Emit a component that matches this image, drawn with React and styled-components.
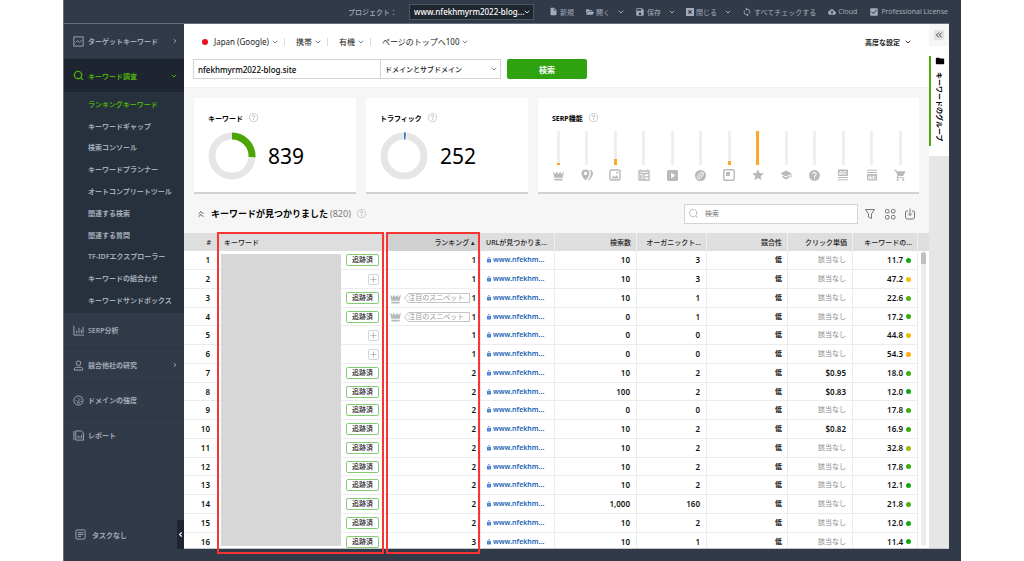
import styled, { createGlobalStyle } from "styled-components";
import {
    MdInsertDriveFile, MdSave, MdSync, MdCloudUpload, MdCheckBox,
    MdStar, MdSchool, MdHelp, MdShoppingCart, MdFolder, MdLock
} from "react-icons/md";
import { FaFolderOpen } from "react-icons/fa";
import { ChevronDown, ChevronRight, ChevronLeft, ChevronsUp, ChevronsLeft, Search, Plus } from "lucide-react";

const Colors = {
    frame: "#313a49",
    frameEdge: "#667080",
    submenu: "#27313d",
    active: "#1e2530",
    menuText: "#a3acb8",
    green: "#4dab09",
    button: "#2ea30f",
    page: "#f6f6f6",
    line: "#ececec",
    icon: "#b9b9b9",
    red: "#f83535",
};

const GlobalStyle = createGlobalStyle`
    * {
        box-sizing: border-box;
    }
    body {
        margin: 0;
        background: white;
        overflow: hidden;
    }
    body, button, input, select {
        font-family: "Noto Sans", "Noto Sans CJK JP", sans-serif;
        font-size: 8px;
        color: #222;
    }
    button {
        border: 0;
        padding: 0;
        background: none;
        cursor: pointer;
    }
    a {
        text-decoration: none;
    }
    svg {
        flex: none;
        display: block;
    }
`;

const Frame = styled.div`
    height: 100vh;
    margin: 0 63px;
    padding-bottom: 12px;
    display: flex;
    flex-direction: column;
    background: ${Colors.frame};
    border-left: 1px solid ${Colors.frameEdge};
`;

/* top bar */
const TopBar = styled.header`
    height: 24px;
    flex: none;
    margin-right: 12px;
    padding-right: 1px;
    border-bottom: 1px solid ${Colors.frameEdge};
    display: flex;
    align-items: center;
    justify-content: flex-end;
    color: ${Colors.menuText};
`;
const ProjectLabel = styled.label`
    display: flex;
    align-items: center;
    gap: 12px;
    margin-right: 15px;
    font-size: 7px;
    font-weight: 500;
`;
const SelectBox = styled.span`
    position: relative;
    display: flex;
    align-items: center;
    color: ${({ $caret }) => $caret || "#76879b"};
    svg {
        position: absolute;
        right: 3px;
        pointer-events: none;
    }
`;
const ProjectSelect = styled.select`
    appearance: none;
    width: 125px;
    height: 16px;
    padding: 0 0 0 4px;
    border: 1px solid #4d5666;
    background: #20262f;
    color: white;
    font-weight: 500;
`;
const ToolButton = styled.button`
    display: flex;
    align-items: center;
    gap: 2px;
    margin-right: ${({ $menu }) => ($menu ? 10 : 12)}px;
    color: ${Colors.menuText};
    font-size: 7px;
    white-space: nowrap;
    &:last-child {
        margin-right: 0;
    }
    svg + span + svg {
        margin-left: 5px;
    }
`;

/* sidebar */
const Body = styled.div`
    flex: 1;
    min-height: 0;
    padding-right: 12px;
    display: flex;
`;
const Sidebar = styled.nav`
    width: 120px;
    flex: none;
    display: flex;
    flex-direction: column;
`;
const MenuItem = styled.a`
    height: ${({ $active }) => ($active ? 34 : 35)}px;
    flex: none;
    display: flex;
    align-items: center;
    gap: 4px;
    padding: 0 6px 0 9px;
    font-weight: 600;
    font-size: 7px;
    color: ${({ $active }) => ($active ? Colors.green : Colors.menuText)};
    background: ${({ $active }) => ($active ? Colors.active : "none")};
    border-bottom: 1px solid ${({ $last }) => ($last ? "transparent" : "#2b3441")};
    span {
        flex: 1;
    }
`;
const SubMenu = styled.ul`
    list-style: none;
    margin: 0;
    padding: 0 0 2px 24px;
    height: 220px;
    flex: none;
    display: flex;
    flex-direction: column;
    background: ${Colors.submenu};
    li {
        flex: 1;
        display: flex;
        align-items: center;
    }
`;
const SubLink = styled.a`
    font-size: 7px;
    font-weight: 600;
    white-space: nowrap;
    color: ${({ $active }) => ($active ? Colors.green : Colors.menuText)};
`;
const SidebarFoot = styled.div`
    margin-top: auto;
    display: flex;
    align-items: stretch;
    height: 29px;
    padding-left: 11px;
    color: ${Colors.menuText};
`;
const Tasks = styled.div`
    flex: 1;
    display: flex;
    align-items: center;
    gap: 6px;
    font-weight: 600;
    font-size: 7px;
`;
const Collapse = styled.button`
    width: 7px;
    background: ${Colors.active};
    color: white;
`;

/* workspace */
const Main = styled.main`
    flex: 1;
    min-width: 0;
    display: flex;
    flex-direction: column;
    background: ${Colors.page};
    border-bottom: 1px solid #c4c6ca;
`;
const Filters = styled.section`
    flex: none;
    height: 64px;
    padding: 10px 10px 0 9px;
    background: white;
    display: flex;
    flex-direction: column;
    gap: 10px;
    border-bottom: 1px solid #f0f0f0;
`;
const FilterRow = styled.div`
    height: 15px;
    padding-right: 7px;
    display: flex;
    align-items: center;
`;
const FilterButton = styled.button`
    display: flex;
    align-items: center;
    gap: 2px;
    height: 8px;
    padding: 0 5px 0 0;
    margin-right: 11px;
    border-right: 1px solid ${({ $last }) => ($last ? "transparent" : "#dcdcdc")};
    svg {
        color: #76879b;
    }
`;
const AdvancedButton = styled(FilterButton)`
    gap: 4px;
    margin: 0 0 0 auto;
    padding: 0;
    border: 0;
    font-size: 7px;
    font-weight: 600;
    svg {
        color: #333;
    }
`;
const Flag = styled.span`
    width: 10px;
    height: 7px;
    margin: 0 4px 0 7px;
    display: flex;
    align-items: center;
    justify-content: center;
    &::after {
        content: "";
        width: 6px;
        height: 6px;
        border-radius: 50%;
        background: #e8131d;
    }
`;
const SearchRow = styled.form`
    display: flex;
    height: 20px;
`;
const DomainInput = styled.input`
    width: 188px;
    padding: 0 4px;
    border: 1px solid #d4d4d4;
    font-weight: 500;
    color: black;
`;
const ScopeSelect = styled.select`
    appearance: none;
    width: 120px;
    height: 20px;
    padding: 0 4px;
    font-size: 7px;
    font-weight: 500;
    background: white;
    border: 1px solid #d4d4d4;
    border-left: 0;
`;
const SearchButton = styled.button`
    width: 80px;
    margin-left: 6px;
    border-radius: 2px;
    background: ${Colors.button};
    color: white;
    font-weight: 700;
`;
const Cards = styled.section`
    flex: none;
    display: flex;
    gap: 10px;
    padding: 10px 10px 0;
`;
const Card = styled.article`
    width: ${({ $wide }) => ($wide ? "auto" : "162px")};
    flex: ${({ $wide }) => ($wide ? 1 : "none")};
    height: 96px;
    padding: 13px 12px 0 14px;
    background: white;
    border-bottom: 2px solid #d2d2d2;
`;
const CardTitle = styled.h2`
    margin: 0;
    height: 13px;
    display: flex;
    align-items: center;
    gap: 6px;
    font-size: 7px;
    font-weight: 700;
    color: black;
`;
const Metric = styled.div`
    display: flex;
    align-items: center;
    gap: 12px;
    margin-top: 8px;
    font-size: 21px;
    line-height: 48px;
    color: black;
`;
const Features = styled.ul`
    list-style: none;
    margin: 7px 0 0 -1px;
    padding: 0;
    display: flex;
    justify-content: space-between;
`;
const Feature = styled.li`
    width: 14px;
    display: flex;
    flex-direction: column;
    align-items: center;
    gap: 3px;
    color: ${Colors.icon};
`;
const FeatureIcon = styled.span`
    height: 14px;
    display: flex;
    align-items: center;
`;
const Bar = styled.div`
    width: 3px;
    height: 34px;
    display: flex;
    align-items: flex-end;
    background: #efefef;
    &::after {
        content: "";
        width: 3px;
        height: ${({ $value }) => $value}px;
        background: #ffa62b;
    }
`;
const ListHead = styled.div`
    flex: 1 0 auto;
    max-height: 39px;
    padding: 0 13px 0 12px;
    display: flex;
    align-items: center;
    color: #777;
    h1 {
        margin: 0 2px 0 5px;
        font-size: 9px;
        font-weight: 700;
        color: black;
    }
    > span {
        font-size: 9px;
        margin-right: 6px;
    }
`;
const ListSearch = styled.label`
    width: 174px;
    height: 20px;
    margin: 0 6px 0 auto;
    padding: 0 3px;
    display: flex;
    align-items: center;
    gap: 6px;
    background: white;
    border: 1px solid #d4d4d4;
    color: #b4bcc6;
    input {
        flex: 1;
        min-width: 0;
        padding: 0;
        border: 0;
        outline: 0;
        font-size: 7px;
    }
    input::placeholder {
        color: #777;
    }
`;
const IconRow = styled.div`
    display: flex;
    gap: 8px;
    button {
        color: #777;
    }
`;

/* keyword table */
const TableArea = styled.section`
    position: relative;
    height: 315px;
    flex: none;
    display: flex;
    background: white;
`;
const TableClip = styled.div`
    flex: 1;
    min-width: 0;
    overflow: hidden;
`;
const Table = styled.table`
    width: 100%;
    table-layout: fixed;
    border-collapse: separate;
    border-spacing: 0;
`;
const Col = styled.col`
    width: ${({ $width }) => $width};
`;
const HeadCell = styled.th`
    height: 18px;
    padding: 0 ${({ $pad }) => $pad || 5}px;
    text-align: ${({ $left }) => ($left ? "left" : "right")};
    font-size: 7px;
    font-weight: 500;
    white-space: nowrap;
    background: ${({ $sorted }) => ($sorted ? "#d0d0d0" : "#dedede")};
    border-right: 1px solid ${({ $plain }) => ($plain ? "#dedede" : "#efefef")};
`;
const Row = styled.tr`
    height: 19px;
    &:nth-child(4n) {
        height: 18px;
    }
`;
const Cell = styled.td`
    padding: 0 ${({ $pad }) => $pad || 6}px;
    line-height: 12px;
    text-align: right;
    white-space: nowrap;
    font-weight: ${({ $muted }) => ($muted ? 400 : 600)};
    color: ${({ $muted }) => ($muted ? "#888" : "#111")};
    font-size: ${({ $small }) => ($small ? 7 : 8)}px;
    border-bottom: 1px solid ${Colors.line};
    border-right: 1px solid ${({ $plain }) => ($plain ? "transparent" : Colors.line)};
`;
const Inline = styled.div`
    display: flex;
    align-items: center;
    justify-content: flex-end;
    gap: 3px;
`;
const Tracked = styled.button`
    width: 33px;
    height: 12px;
    border: 1px solid #86cc71;
    border-radius: 2px;
    font-size: 7px;
    line-height: 10px;
    font-weight: 500;
`;
const AddButton = styled.button`
    width: 11px;
    height: 11px;
    display: flex;
    align-items: center;
    justify-content: center;
    border: 1px solid #d5d5d5;
    border-radius: 2px;
    color: #aaa;
`;
const Snippet = styled.span`
    position: relative;
    width: 66px;
    height: 10px;
    display: flex;
    align-items: center;
    justify-content: center;
    font-size: 7px;
    line-height: 10px;
    font-weight: 400;
    color: #999;
    svg {
        position: absolute;
        inset: 0;
    }
`;
const SnippetIcon = styled.span`
    color: ${Colors.icon};
`;
const UrlLink = styled.a`
    display: flex;
    align-items: center;
    gap: 1px;
    font-size: 7px;
    color: #1763b5;
    svg {
        color: #3b82d6;
    }
`;
const Dot = styled.i`
    width: 5px;
    height: 5px;
    border-radius: 50%;
    background: ${({ $color }) => $color};
`;
const Scroller = styled.div`
    width: 11px;
    border-top: 18px solid #dedede;
    padding: 1px 3px;
    &::before {
        content: "";
        display: block;
        width: 5px;
        height: 294px;
        border-radius: 3px;
        background: linear-gradient(#c0c0c0 12px, #ececec 12px);
    }
`;
const Redaction = styled.div`
    position: absolute;
    top: 21px;
    bottom: 2px;
    left: 37px;
    width: 120px;
    background: #d7d7d7;
`;
const Outline = styled.div`
    position: absolute;
    top: -1px;
    bottom: -6px;
    left: ${({ $left }) => $left}px;
    width: ${({ $width }) => $width}px;
    border: 2px solid ${Colors.red};
    pointer-events: none;
`;

/* right rail */
const Rail = styled.aside`
    width: 20px;
    flex: none;
    background: #e6e6e6;
    border-bottom: 1px solid #c4c6ca;
`;
const RailTop = styled.div`
    height: 22px;
    padding: 6px 5px;
    background: #f6f6f6;
    button {
        width: 10px;
        height: 10px;
        border-radius: 2px;
        background: #e2e2e2;
    }
`;
const RailTab = styled.button`
    width: 20px;
    height: 110px;
    padding: 10px 0;
    background: white;
    display: flex;
`;
const RailLabel = styled.span`
    height: 90px;
    width: 20px;
    border-left: 2px solid ${Colors.green};
    display: flex;
    flex-direction: column;
    align-items: center;
    gap: 6px;
    font-size: 7px;
    font-weight: 600;
    color: black;
    span {
        writing-mode: vertical-rl;
        text-orientation: sideways;
        white-space: nowrap;
    }
`;

const Stroke = ({ size = 11, box = 12, children, width = 1 }) => (
    <svg width={size} height={size} viewBox={`0 0 ${box} ${box}`} fill="none" stroke="currentColor" strokeWidth={width}>
        {children}
    </svg>
);
const Solid = ({ size = 12, children }) => (
    <svg width={size} height={size} viewBox="0 0 12 12" fill="currentColor">{children}</svg>
);

const Crown = ({ size }) => (
    <Solid size={size}>
        <path d="M0 1.500L3 4.500 4 1.500l2 3 2-3 1 3 3-3L10.600 8.500H1.400zM1.500 9.500h9v2h-9z" />
    </Solid>
);
const Help = () => (
    <Stroke size={9}>
        <circle cx="6" cy="6" r="5.4" stroke="#bbb" />
        <path d="M4.3 4.8a1.7 1.7 0 1 1 2.5 1.4c-.6.3-.8.6-.8 1.2M6 8.3v1" stroke="#aaa" />
    </Stroke>
);
const Caret = () => <ChevronDown size={8} strokeWidth={3} />;

const Donut = ({ color, share }) => (
    <svg width="48" height="48" viewBox="0 0 48 48" fill="none" strokeWidth="7">
        <circle cx="24" cy="24" r="20" stroke="#e6e6e6" />
        <circle cx="24" cy="24" r="20" stroke="white" pathLength="100"
            strokeDasharray={`${share + 1.6} 100`} strokeDashoffset="0.8" transform="rotate(-90 24 24)" />
        <circle cx="24" cy="24" r="20" stroke={color} pathLength="100"
            strokeDasharray={`${share} 100`} transform="rotate(-90 24 24)" />
    </svg>
);

const features = [
    { name: "crown", value: 2, icon: <Crown size={11} /> },
    { name: "pins", value: 0, icon: (
        <Solid>
            <path fillRule="evenodd" d="M4.500.5A4 4 0 0 1 8.500 4.500C8.500 7.500 4.500 11.500 4.500 11.500S.5 7.500.5 4.500a4 4 0 0 1 4-4zm0 2.300a1.700 1.700 0 1 0 0 3.400 1.700 1.700 0 0 0 0-3.400z" />
            <path d="M8 .5c2.400.2 4 1.800 4 4 0 2.500-2.200 5.200-4.300 7l-.7-.8c1.600-1.800 2.900-4 2.900-6.200C9.900 2.700 9.200 1.500 8 .5z" />
        </Solid>
    ) },
    { name: "image", value: 6, icon: (
        <Stroke size={12} width={1.4}>
            <rect x="1" y="1" width="10" height="10" rx="1" />
            <path d="M2.500 9.500h7L7.500 6 6 8 4.500 6.500z" fill="currentColor" stroke="none" />
            <rect x="7.300" y="2.800" width="1.800" height="1.800" fill="currentColor" stroke="none" />
        </Stroke>
    ) },
    { name: "news", value: 0, icon: (
        <Stroke size={12} width={1.3}>
            <path d="M1 2h10v9H1zM1 4.500h10M2.500.5v2M9.500.5v2M6 5v6M6 7.800H11" />
            <path d="M2 7h2.500M2 9h2.500" />
        </Stroke>
    ) },
    { name: "video", value: 0, icon: (
        <Solid size={11}>
            <path fillRule="evenodd" d="M1 0h10l1 1v10l-1 1H1l-1-1V1zm3.500 3v6L9 6z" />
        </Solid>
    ) },
    { name: "link", value: 0, icon: (
        <Stroke size={11}>
            <circle cx="6" cy="6" r="6" fill="currentColor" stroke="none" />
            <g stroke="white" transform="rotate(-45 6 6)">
                <rect x="2" y="4.200" width="8" height="3.600" rx="1.800" />
                <path d="M4 6h4" />
            </g>
        </Stroke>
    ) },
    { name: "box", value: 4, icon: (
        <Stroke size={12} width={1.4}>
            <rect x="0.800" y="0.800" width="10.400" height="10.400" rx="1" />
            <rect x="3" y="3" width="4" height="4" fill="currentColor" stroke="none" />
        </Stroke>
    ) },
    { name: "star", value: 34, icon: <MdStar size={14} /> },
    { name: "school", value: 0, icon: <MdSchool size={12} /> },
    { name: "question", value: 0, icon: <MdHelp size={13} /> },
    { name: "ad top", value: 0, icon: (
        <Stroke size={12}>
            <rect x="1" y="0.500" width="10" height="6.500" rx="1" fill="currentColor" stroke="none" />
            <path stroke="white" d="M2.800 6V3.500L4 2l1.200 1.500V6M3 4.500h2M7 2.500h1.300L9.300 3.500v1L8.300 5.500H7z" />
            <path d="M1 8.500h10M1 10.800h10" stroke="currentColor" />
        </Stroke>
    ) },
    { name: "ad bottom", value: 0, icon: (
        <Stroke size={12}>
            <rect x="1" y="5" width="10" height="6.500" rx="1" fill="currentColor" stroke="none" />
            <path stroke="white" d="M2.800 10.500V8L4 6.500 5.200 8v2.500M3 9h2M7 7h1.300l1 1v1l-1 1H7z" />
            <path d="M1 1.200h10M1 3.500h10" stroke="currentColor" />
        </Stroke>
    ) },
    { name: "cart", value: 0, icon: <MdShoppingCart size={13} /> },
];

const subItems = [
    "ランキングキーワード", "キーワードギャップ", "検索コンソール", "キーワードプランナー",
    "オートコンプリートツール", "関連する検索", "関連する質問", "TF-IDFエクスプローラー",
    "キーワードの組合わせ", "キーワードサンドボックス",
];

// tracked, rank, searches, organic traffic, cost per click, difficulty, dot colour
const rows = [
    [true, 1, "10", 3, null, "11.7", "#11a611"],
    [false, 1, "10", 3, null, "47.2", "#f6bd0b"],
    [true, 1, "10", 1, null, "22.6", "#58b00c"],
    [true, 1, "0", 1, null, "17.2", "#39a90d"],
    [false, 1, "0", 0, null, "44.8", "#eebc0b"],
    [false, 1, "0", 0, null, "54.3", "#ffab0b"],
    [true, 2, "10", 2, "$0.95", "18.0", "#3dac0d"],
    [true, 2, "100", 2, "$0.83", "12.0", "#11a611"],
    [true, 2, "0", 0, null, "17.8", "#3dac0d"],
    [true, 2, "10", 2, "$0.82", "16.9", "#39a90d"],
    [true, 2, "10", 2, null, "32.8", "#a8b60a"],
    [true, 2, "10", 2, null, "17.8", "#3dac0d"],
    [true, 2, "10", 2, null, "12.1", "#11a611"],
    [true, 2, "1,000", 160, null, "21.8", "#54af0c"],
    [true, 2, "10", 2, null, "12.0", "#11a611"],
    [true, 3, "10", 1, null, "11.4", "#11a611"],
];

const KeywordRow = ({ row, index }) => {
    const [tracked, rank, searches, traffic, cost, difficulty, color] = row;
    const snippet = index === 3 || index === 4;

    return (
        <Row>
            <Cell $pad={7} $plain>{index}</Cell>
            <Cell $plain>
                <Inline>
                    {tracked
                        ? <Tracked type="button">追跡済</Tracked>
                        : <AddButton type="button" aria-label="追加"><Plus size={9} /></AddButton>}
                </Inline>
            </Cell>
            <Cell $pad={4}>
                <Inline>
                    {snippet && (
                        <>
                            <SnippetIcon><Crown size={11} /></SnippetIcon>
                            <Snippet>
                                <svg width="66" height="10" viewBox="0 0 66 10" fill="none" stroke="#c4c4c4">
                                    <path d="M4.500.5H65.500V9.500H4.500L.5 5z" />
                                </svg>
                                注目のスニペット
                            </Snippet>
                        </>
                    )}
                    {rank}
                </Inline>
            </Cell>
            <Cell $pad={5}>
                <UrlLink href="#"><MdLock size={6} />www.nfekhm...</UrlLink>
            </Cell>
            <Cell>{searches}</Cell>
            <Cell>{traffic}</Cell>
            <Cell $small $pad={5}>低</Cell>
            <Cell $small={!cost} $muted={!cost}>{cost || "該当なし"}</Cell>
            <Cell><Inline>{difficulty}<Dot $color={color} /></Inline></Cell>
        </Row>
    );
}

const KeywordTable = () => (
    <TableArea>
        <TableClip>
            <Table>
                <colgroup>
                    <Col $width="34px" />
                    <Col $width="168px" />
                    <Col $width="95px" />
                    <Col $width="74px" />
                    <Col $width="82px" />
                    <Col $width="70px" />
                    <Col $width="auto" />
                    <Col $width="65px" />
                    <Col $width="65px" />
                </colgroup>
                <thead>
                    <tr>
                        <HeadCell $plain $pad={6}>#</HeadCell>
                        <HeadCell $left $pad={6}>キーワード</HeadCell>
                        <HeadCell $sorted $plain>ランキング ▴</HeadCell>
                        <HeadCell $left>URLが見つかりま...</HeadCell>
                        <HeadCell>検索数</HeadCell>
                        <HeadCell>オーガニックト...</HeadCell>
                        <HeadCell>競合性</HeadCell>
                        <HeadCell>クリック単価</HeadCell>
                        <HeadCell>キーワードの...</HeadCell>
                    </tr>
                </thead>
                <tbody>
                    {rows.map((row, i) => <KeywordRow key={i} row={row} index={i + 1} />)}
                </tbody>
            </Table>
        </TableClip>
        <Scroller />
        <Redaction />
        <Outline $left={33} $width={167} />
        <Outline $left={202} $width={94} />
    </TableArea>
);

const App = () => {
    return (
        <>
            <GlobalStyle />
            <Frame>
                <TopBar>
                    <ProjectLabel>
                        プロジェクト：
                        <SelectBox $caret="#d5dae0">
                            <ProjectSelect defaultValue="blog">
                                <option value="blog">www.nfekhmyrm2022-blog...</option>
                            </ProjectSelect>
                            <Caret />
                        </SelectBox>
                    </ProjectLabel>
                    <ToolButton><MdInsertDriveFile size={9} /><span>新規</span></ToolButton>
                    <ToolButton $menu><FaFolderOpen size={8} /><span>開く</span><Caret /></ToolButton>
                    <ToolButton $menu><MdSave size={10} /><span>保存</span><Caret /></ToolButton>
                    <ToolButton $menu>
                        <Solid size={8}>
                            <path fillRule="evenodd" d="M0 0h12v12H0zM3 4.200L4.800 6 3 7.800 4.200 9 6 7.200 7.800 9 9 7.800 7.200 6 9 4.200 7.800 3 6 4.800 4.200 3z" />
                        </Solid>
                        <span>閉じる</span><Caret />
                    </ToolButton>
                    <ToolButton><MdSync size={10} /><span>すべてチェックする</span></ToolButton>
                    <ToolButton><MdCloudUpload size={8} /><span>Cloud</span></ToolButton>
                    <ToolButton><MdCheckBox size={10} /><span>Professional License</span></ToolButton>
                </TopBar>
                <Body>
                    <Sidebar>
                        <MenuItem href="#">
                            <Stroke><rect x="1" y="1" width="10" height="10" /><path d="M3 7l2-2 2 2 2.500-2.500" /></Stroke>
                            <span>ターゲットキーワード</span>
                            <ChevronRight size={6} strokeWidth={4} />
                        </MenuItem>
                        <MenuItem href="#" $active>
                            <Search size={11} strokeWidth={3} />
                            <span>キーワード調査</span>
                            <Caret />
                        </MenuItem>
                        <SubMenu>
                            {subItems.map((item, i) => (
                                <li key={item}><SubLink href="#" $active={i === 0}>{item}</SubLink></li>
                            ))}
                        </SubMenu>
                        <MenuItem href="#">
                            <Stroke><path d="M1 1v10h11M4 9V6M6.500 9V3M9 9V5M11 9V2" /></Stroke>
                            <span>SERP分析</span>
                        </MenuItem>
                        <MenuItem href="#">
                            <Stroke><circle cx="6" cy="3.500" r="2.500" /><path d="M1.500 11V9.500C1.500 8.500 3 8 4 8h4c1 0 2.500.5 2.500 1.500V11z" /></Stroke>
                            <span>競合他社の研究</span>
                            <ChevronRight size={6} strokeWidth={4} />
                        </MenuItem>
                        <MenuItem href="#">
                            <Stroke><circle cx="6" cy="6" r="5" /><path d="M5 7.500L8.500 4M3 6h1M6 3v1M8 7h1.500M4.500 8.500h3" /></Stroke>
                            <span>ドメインの強度</span>
                        </MenuItem>
                        <MenuItem href="#" $last>
                            <Stroke><path d="M3 1h6l2.500 2.500V11H3zM1 1v10M5.500 9V6M7.500 9V7M9.500 9V5" /></Stroke>
                            <span>レポート</span>
                        </MenuItem>
                        <SidebarFoot>
                            <Tasks>
                                <Stroke><rect x="1" y="1" width="10" height="10" rx="1" /><path d="M3 4h6M3 6h6M3 8h3.500" /></Stroke>
                                タスクなし
                            </Tasks>
                            <Collapse aria-label="折りたたむ"><ChevronLeft size={7} strokeWidth={4} /></Collapse>
                        </SidebarFoot>
                    </Sidebar>
                    <Main>
                        <Filters>
                            <FilterRow>
                                <Flag />
                                <FilterButton>Japan (Google)<Caret /></FilterButton>
                                <FilterButton>携帯<Caret /></FilterButton>
                                <FilterButton>有機<Caret /></FilterButton>
                                <FilterButton $last>ページのトップへ100<Caret /></FilterButton>
                                <AdvancedButton>高度な設定<Caret /></AdvancedButton>
                            </FilterRow>
                            <SearchRow onSubmit={(e) => e.preventDefault()}>
                                <DomainInput aria-label="ドメイン" defaultValue="nfekhmyrm2022-blog.site" />
                                <SelectBox>
                                    <ScopeSelect aria-label="範囲">
                                        <option>ドメインとサブドメイン</option>
                                    </ScopeSelect>
                                    <Caret />
                                </SelectBox>
                                <SearchButton>検索</SearchButton>
                            </SearchRow>
                        </Filters>
                        <Cards>
                            <Card>
                                <CardTitle>キーワード <Help /></CardTitle>
                                <Metric><Donut color="#4aa505" share={26} />839</Metric>
                            </Card>
                            <Card>
                                <CardTitle>トラフィック <Help /></CardTitle>
                                <Metric><Donut color="#3a7cc4" share={1.5} />252</Metric>
                            </Card>
                            <Card $wide>
                                <CardTitle>SERP機能 <Help /></CardTitle>
                                <Features>
                                    {features.map(({ name, value, icon }) => (
                                        <Feature key={name}>
                                            <Bar $value={value} />
                                            <FeatureIcon>{icon}</FeatureIcon>
                                        </Feature>
                                    ))}
                                </Features>
                            </Card>
                        </Cards>
                        <ListHead>
                            <ChevronsUp size={10} color="#333" />
                            <h1>キーワードが見つかりました</h1>
                            <span>(820)</span>
                            <Help />
                            <ListSearch>
                                <Search size={11} />
                                <input aria-label="検索" placeholder="検索" />
                            </ListSearch>
                            <IconRow>
                                <button aria-label="フィルター">
                                    <Stroke size={12}><path d="M1.500 1.500h9L7.500 6v4.500L4.500 9V6z" /></Stroke>
                                </button>
                                <button aria-label="表示">
                                    <Stroke size={12}>
                                        <rect x="1.500" y="1.500" width="3.500" height="3.500" rx="1" /><rect x="7.500" y="1.500" width="3.500" height="3.500" rx="1" />
                                        <rect x="1.500" y="7.500" width="3.500" height="3.500" rx="1" /><rect x="7.500" y="7.500" width="3.500" height="3.500" rx="1" />
                                    </Stroke>
                                </button>
                                <button aria-label="ダウンロード">
                                    <Stroke size={12}><path d="M4 3H2.500a1 1 0 0 0-1 1v5a2 2 0 0 0 2 2h5a2 2 0 0 0 2-2V4a1 1 0 0 0-1-1H8M6 .5V7.500M4 5.500l2 2 2-2" /></Stroke>
                                </button>
                            </IconRow>
                        </ListHead>
                        <KeywordTable />
                    </Main>
                    <Rail>
                        <RailTop><button aria-label="折りたたむ"><ChevronsLeft size={10} /></button></RailTop>
                        <RailTab><RailLabel><MdFolder size={10} /><span>キーワードのグループ</span></RailLabel></RailTab>
                    </Rail>
                </Body>
            </Frame>
        </>
    );
}

export default App;
